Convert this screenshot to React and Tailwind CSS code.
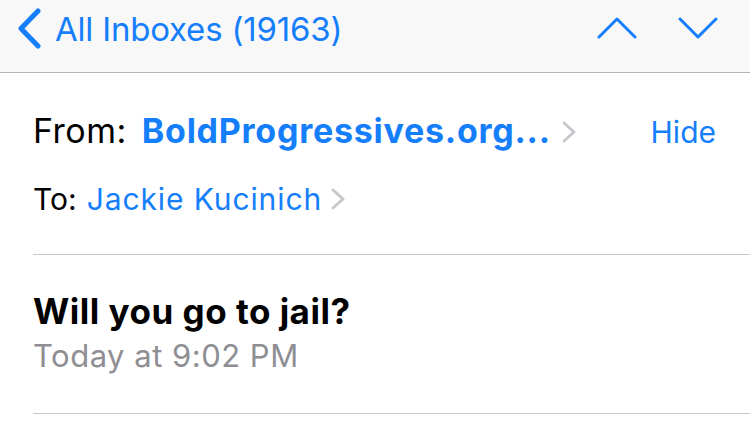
import React from 'react';

const BLUE = 'text-[#157efb]';

function Chevron({ dir = 'right', className = '' }) {
  const d = {
    left: 'M21 3 L4 20.5 L21 38',
    up: 'M2 20 L20 2 L38 20',
    down: 'M2 2 L20 20 L38 2',
    right: 'M3 3 L13 12 L3 21',
  }[dir];
  const box = dir === 'left' ? '0 0 25 41' : dir === 'right' ? '0 0 16 24' : '0 0 40 22';
  return (
    <svg className={className} viewBox={box} fill="none" stroke="currentColor" strokeLinecap="round" strokeLinejoin="round" strokeWidth={dir === 'left' ? 5 : 3}>
      <path d={d} />
    </svg>
  );
}

export default function App() {
  return (
    <div className="w-[750px] h-[423px] bg-white overflow-hidden font-['Inter','Liberation_Sans',sans-serif]">
      {/* nav bar */}
      <div className="h-[73px] bg-[#f8f8f8] border-b border-[#b4b4b4] flex items-start">
        <div className={`flex items-start ${BLUE} pl-[17px]`}>
          <Chevron dir="left" className="w-[25px] h-[41px] mt-[8px]" />
          <span className="ml-[13px] mt-[9px] text-[33px] leading-[40px] tracking-[-0.2px]">All Inboxes (19163)</span>
        </div>
        <div className={`ml-auto flex items-start gap-[41px] pr-[32px] pt-[17px] ${BLUE}`}>
          <Chevron dir="up" className="w-[40px] h-[22px]" />
          <Chevron dir="down" className="w-[40px] h-[22px]" />
        </div>
      </div>

      {/* header */}
      <div className="pl-[33px]">
        <div className="pr-[34px] pt-[38px] flex items-baseline">
          <span className="text-black text-[34px] leading-[40px] tracking-[0.5px]">From:</span>
          <span className={`ml-[15px] text-[34px] leading-[40px] font-bold ${BLUE} tracking-[0.75px]`}>BoldProgressives.org...</span>
          <Chevron dir="right" className="w-[16px] h-[24px] ml-[10px] self-center text-[#c7c7cc]" />
          <span className={`ml-auto text-[30px] leading-[40px] ${BLUE}`}>Hide</span>
        </div>
        <div className="pt-[29px] flex items-center text-[30px] leading-[36px]">
          <span className="text-black">To:</span>
          <span className={`ml-[10px] ${BLUE} tracking-[0.9px]`}>Jackie Kucinich</span>
          <Chevron dir="right" className="w-[16px] h-[24px] ml-[8px] text-[#c7c7cc]" />
        </div>
        <div className="mt-[37px] border-b border-[#c8c7cc]" />

        <div className="pt-[36px] text-[35px] leading-[40px] font-bold text-black tracking-[0.5px]">Will you go to jail?</div>
        <div className="mt-[5px] text-[31px] leading-[40px] text-[#8e8e93] tracking-[0.5px]">Today at 9:02 PM</div>
        <div className="mt-[37px] border-b border-[#c8c7cc]" />
      </div>
    </div>
  );
}
